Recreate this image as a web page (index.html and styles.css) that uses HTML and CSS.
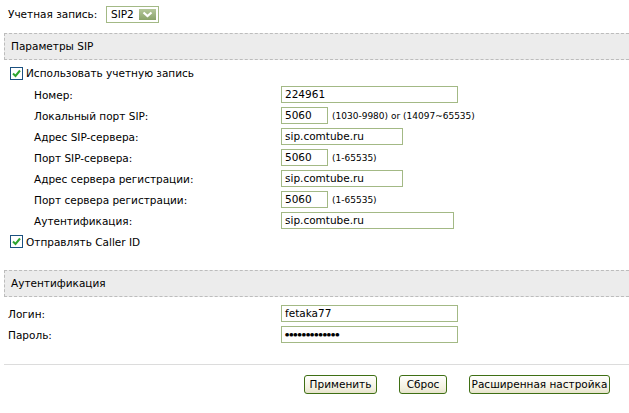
FILE: index.html
```html
<!DOCTYPE html>
<html lang="ru">
<head>
<meta charset="utf-8">
<title>SIP</title>
<link rel="stylesheet" href="styles.css">
</head>
<body>
<div class="account">
  <span class="account-label">Учетная запись:</span>
  <span class="select">
    <span class="select-value">SIP2</span>
    <span class="select-btn"><svg width="11" height="7" viewBox="0 0 11 7"><path d="M1.5 1.5 L5.5 5 L9.5 1.5" fill="none" stroke="#fff" stroke-width="2.2"/></svg></span>
  </span>
</div>

<div class="section-head">Параметры SIP</div>

<div class="check-row first">
  <span class="checkbox"><svg width="11" height="11" viewBox="0 0 11 11"><path d="M2 5.5 L4.5 8 L9 2.5" fill="none" stroke="#2ea52e" stroke-width="2"/></svg></span>
  <span>Использовать учетную запись</span>
</div>

<div class="form">
  <div class="label">Номер:</div>
  <div class="field"><span class="input w-long">224961</span></div>

  <div class="label">Локальный порт SIP:</div>
  <div class="field"><span class="input w-port">5060</span><span class="hint">(1030-9980) or (14097~65535)</span></div>

  <div class="label">Адрес SIP-сервера:</div>
  <div class="field"><span class="input w-mid">sip.comtube.ru</span></div>

  <div class="label">Порт SIP-сервера:</div>
  <div class="field"><span class="input w-port">5060</span><span class="hint">(1-65535)</span></div>

  <div class="label">Адрес сервера регистрации:</div>
  <div class="field"><span class="input w-mid">sip.comtube.ru</span></div>

  <div class="label">Порт сервера регистрации:</div>
  <div class="field"><span class="input w-port">5060</span><span class="hint">(1-65535)</span></div>

  <div class="label">Аутентификация:</div>
  <div class="field"><span class="input w-auth">sip.comtube.ru</span></div>
</div>

<div class="check-row">
  <span class="checkbox"><svg width="11" height="11" viewBox="0 0 11 11"><path d="M2 5.5 L4.5 8 L9 2.5" fill="none" stroke="#2ea52e" stroke-width="2"/></svg></span>
  <span>Отправлять Caller ID</span>
</div>

<div class="section-head second">Аутентификация</div>

<div class="form auth">
  <div class="label">Логин:</div>
  <div class="field"><span class="input w-long">fetaka77</span></div>

  <div class="label">Пароль:</div>
  <div class="field"><span class="input w-long pass">●●●●●●●●●●●●●</span></div>
</div>

<div class="divider"></div>

<div class="buttons">
  <span class="btn b-apply">Применить</span>
  <span class="btn b-reset">Сброс</span>
  <span class="btn b-adv">Расширенная настройка</span>
</div>
</body>
</html>
```

FILE: styles.css
```css
html, body {
  margin: 0;
  padding: 0;
  background: #fff;
}
body {
  font-family: "DejaVu Sans", Tahoma, sans-serif;
  font-size: 10.5px;
  color: #000;
  width: 629px;
}
.account {
  display: flex;
  align-items: center;
  height: 28px;
  padding-left: 8px;
}
.account-label {
  width: 98px;
}
.select {
  display: flex;
  align-items: center;
  box-sizing: border-box;
  width: 53px;
  height: 17px;
  border: 1px solid #a3b985;
  background: #fff;
  padding-left: 4px;
}
.select-value {
  width: 28px;
}
.select-btn {
  display: flex;
  align-items: center;
  justify-content: center;
  width: 17px;
  height: 11px;
  background: linear-gradient(#b4c79a, #8aa36a);
}
.section-head {
  margin-top: 5px;
  margin-left: 4px;
  height: 25px;
  line-height: 25px;
  padding-left: 6px;
  background: #ececec;
  border-top: 1px dashed #bcbcbc;
  border-bottom: 1px dashed #bcbcbc;
  border-left: 1px dashed #bcbcbc;
}
.section-head.second {
  margin-top: 18px;
}
.check-row {
  display: flex;
  align-items: center;
  gap: 3px;
  height: 21px;
  padding-left: 10px;
}
.check-row.first {
  height: 24px;
  padding-top: 2px;
  box-sizing: border-box;
}
.checkbox {
  display: flex;
  align-items: center;
  justify-content: center;
  box-sizing: border-box;
  width: 13px;
  height: 13px;
  border: 1px solid #1c5180;
  background: #fff;
}
.form {
  display: grid;
  grid-template-columns: 247px 1fr;
  grid-auto-rows: 21px;
  padding-left: 34px;
}
.form.auth {
  padding-left: 8px;
  grid-template-columns: 273px 1fr;
  margin-top: 6px;
}
.label {
  display: flex;
  align-items: center;
}
.field {
  display: flex;
  align-items: center;
}
.input {
  box-sizing: border-box;
  height: 17px;
  line-height: 15px;
  border: 1px solid #a3b985;
  padding-left: 3px;
  background: #fff;
  white-space: nowrap;
  overflow: hidden;
}
.w-long { width: 177px; }
.w-port { width: 47px; }
.w-mid { width: 122px; }
.w-auth { width: 173px; }
.pass {
  font-size: 4.8px;
  line-height: 15px;
  padding-left: 3px;
}
.hint {
  font-size: 9px;
  margin-left: 4px;
}
.divider {
  margin: 19px 0 0 4px;
  border-top: 1px solid #dcdcdc;
}
.buttons {
  display: flex;
  padding-left: 304px;
  margin-top: 10px;
  gap: 22px;
}
.btn {
  box-sizing: border-box;
  height: 19px;
  line-height: 17px;
  text-align: center;
  border: 1px solid #3f6f14;
  border-radius: 3px;
  background: linear-gradient(#ffffff, #f3f1e0 70%, #e6e3cc);
  white-space: nowrap;
}
.b-apply { width: 73px; }
.b-reset { width: 48px; }
.b-adv { width: 141px; }
```
